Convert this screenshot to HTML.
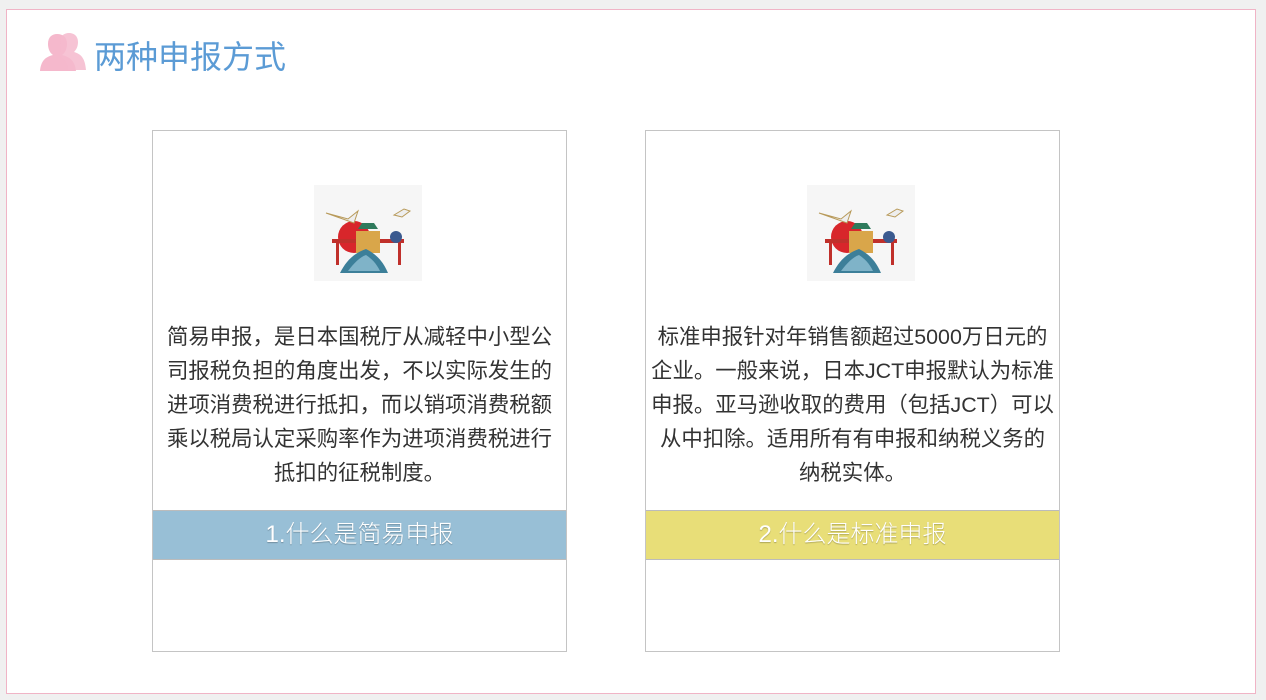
<!DOCTYPE html>
<html><head><meta charset="utf-8"><style>
*{margin:0;padding:0;box-sizing:border-box}
body{width:1266px;height:700px;background:#f0f0f0;position:relative;overflow:hidden;font-family:"Liberation Sans","Noto Sans CJK SC",sans-serif}
.frame{position:absolute;left:6px;top:9px;width:1250px;height:685px;background:#fff;border:1px solid #f0b4c6}
.title{position:absolute;left:94px;top:36px;font-size:32px;color:#5b9bd5;line-height:42px}
.icon{position:absolute;left:38px;top:32px}
.card{position:absolute;top:130px;width:415px;height:522px;border:1px solid #c4c4c4;background:#fff}
.img{position:absolute;left:161px;top:54px;width:108px;height:96px;background:#f6f6f6}
.txt{position:absolute;left:0;right:0;top:189px;text-align:center;font-size:21.4px;line-height:34px;color:#333;white-space:nowrap}
.bar{position:absolute;left:0;right:0;top:379px;height:50px;border-top:1px solid #bbb;border-bottom:1px solid #bbb;text-align:center;font-size:24px;line-height:48px;color:#fff;text-shadow:0 1px 1px rgba(0,0,0,.25);font-weight:300}
</style></head><body>
<div class="frame"></div>
<svg class="icon" width="48" height="42" viewBox="0 0 48 42">
<path d="M10 12c0-7 4-10 9-10 6 0 10 3 10 10 0 5-2 9-5 11 8 2 13 6 14 16H2c1-10 5-14 13-16-3-2-5-6-5-11z" fill="#f5b8cc"/>
<path d="M22 10c0-6 4-9 9-9s9 3 9 9c0 5-2 8-4 10 7 2 11 6 12 18H30c-1-8-4-12-9-14 2-3 1-7 1-14z" fill="#f5b8cc" opacity=".85"/>
</svg>
<div class="title">两种申报方式</div>

<div class="card" style="left:152px">
 <svg class="img" viewBox="0 0 108 96">
  <rect width="108" height="96" fill="#f6f6f6"/>
  <circle cx="40" cy="52" r="16" fill="#d8262b"/>
  <path d="M12 28l22 6 10-8-4 12z" fill="#eee" stroke="#b89a5a" stroke-width="1"/>
  <path d="M80 30l10-6 6 2-8 6z" fill="#eee" stroke="#b89a5a"/>
  <rect x="18" y="54" width="72" height="4" fill="#c0302b"/>
  <rect x="22" y="58" width="3" height="22" fill="#c0302b"/>
  <rect x="84" y="58" width="3" height="22" fill="#c0302b"/>
  <path d="M44 44h20l-4-6h-12z" fill="#2e7a5c"/>
  <rect x="42" y="46" width="24" height="22" fill="#d9a64a"/>
  <circle cx="82" cy="52" r="6" fill="#3b5a8f"/>
  <path d="M26 88c6-12 14-20 26-24 8 4 16 10 22 24z" fill="#3c7f99"/>
  <path d="M34 86c6-8 12-14 18-16 6 4 10 8 14 16z" fill="#7fb3c8"/>
 </svg>
 <div class="txt">简易申报，是日本国税厅从减轻中小型公<br>司报税负担的角度出发，不以实际发生的<br>进项消费税进行抵扣，而以销项消费税额<br>乘以税局认定采购率作为进项消费税进行<br>抵扣的征税制度。</div>
 <div class="bar" style="background:#98bfd6">1.什么是简易申报</div>
</div>

<div class="card" style="left:645px">
 <svg class="img" viewBox="0 0 108 96">
  <rect width="108" height="96" fill="#f6f6f6"/>
  <circle cx="40" cy="52" r="16" fill="#d8262b"/>
  <path d="M12 28l22 6 10-8-4 12z" fill="#eee" stroke="#b89a5a" stroke-width="1"/>
  <path d="M80 30l10-6 6 2-8 6z" fill="#eee" stroke="#b89a5a"/>
  <rect x="18" y="54" width="72" height="4" fill="#c0302b"/>
  <rect x="22" y="58" width="3" height="22" fill="#c0302b"/>
  <rect x="84" y="58" width="3" height="22" fill="#c0302b"/>
  <path d="M44 44h20l-4-6h-12z" fill="#2e7a5c"/>
  <rect x="42" y="46" width="24" height="22" fill="#d9a64a"/>
  <circle cx="82" cy="52" r="6" fill="#3b5a8f"/>
  <path d="M26 88c6-12 14-20 26-24 8 4 16 10 22 24z" fill="#3c7f99"/>
  <path d="M34 86c6-8 12-14 18-16 6 4 10 8 14 16z" fill="#7fb3c8"/>
 </svg>
 <div class="txt">标准申报针对年销售额超过5000万日元的<br>企业。一般来说，日本JCT申报默认为标准<br>申报。亚马逊收取的费用（包括JCT）可以<br>从中扣除。适用所有有申报和纳税义务的<br>纳税实体。</div>
 <div class="bar" style="background:#e8de78">2.什么是标准申报</div>
</div>
</body></html>
